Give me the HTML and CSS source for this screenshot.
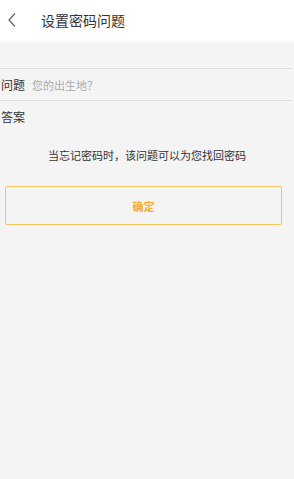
FILE: index.html
```html
<!DOCTYPE html>
<html lang="zh">
<head>
<meta charset="utf-8">
<link rel="stylesheet" href="styles.css">
</head>
<body>
<div class="page">
  <header class="topbar">
    <span class="back">
      <svg width="10" height="16" viewBox="0 0 10 16"><path d="M8 1.5 L2 8 L8 14.5" fill="none" stroke="#666" stroke-width="1.3"/></svg>
    </span>
    <span class="title">设置密码问题</span>
  </header>
  <div class="form">
    <div class="row"><span class="label">问题</span><span class="placeholder">您的出生地<span class="punct">？</span></span></div>
    <div class="row"><span class="label">答案</span></div>
  </div>
  <p class="hint">当忘记密码时<span class="punct">，</span>该问题可以为您找回密码</p>
  <div class="btn">确定</div>
</div>
</body>
</html>
```
FILE: styles.css
```css
html, body { margin: 0; padding: 0; }
body {
  background: #f4f4f4;
  font-family: "Noto Sans CJK SC", "Noto Sans", sans-serif;
  width: 294px;
  height: 479px;
  overflow: hidden;
}
.topbar {
  height: 42px;
  background: #fff;
  display: flex;
  align-items: center;
}
.back { width: 41px; display: flex; align-items: center; padding-left: 7px; box-sizing: border-box; height: 16px; margin-top: -2px; }
.back svg { display: block; }
.title { font-size: 14px; color: #333; margin-top: -3px; }
.form { margin-top: 26px; width: 292px; }
.row {
  height: 31px;
  border-top: 1px solid #dcdcdc;
  display: flex;
  align-items: center;
  padding-left: 1px;
  font-size: 12px;
}
.label { color: #333; width: 31px; }
.placeholder { color: #aaa; font-size: 11px; }
.punct { font-family: "Noto Sans CJK TC", sans-serif; }
.hint {
  margin: 15px 0 0;
  text-align: center;
  font-size: 11px;
  color: #333;
  line-height: 16px;
}
.btn {
  margin: 23px 0 0 5px;
  width: 275px;
  height: 37px;
  border: 1.5px solid #f6c55a;
  border-radius: 2px;
  display: flex;
  align-items: center;
  justify-content: center;
  color: #f2ae2e;
  font-size: 11px;
  font-weight: bold;
}
```
